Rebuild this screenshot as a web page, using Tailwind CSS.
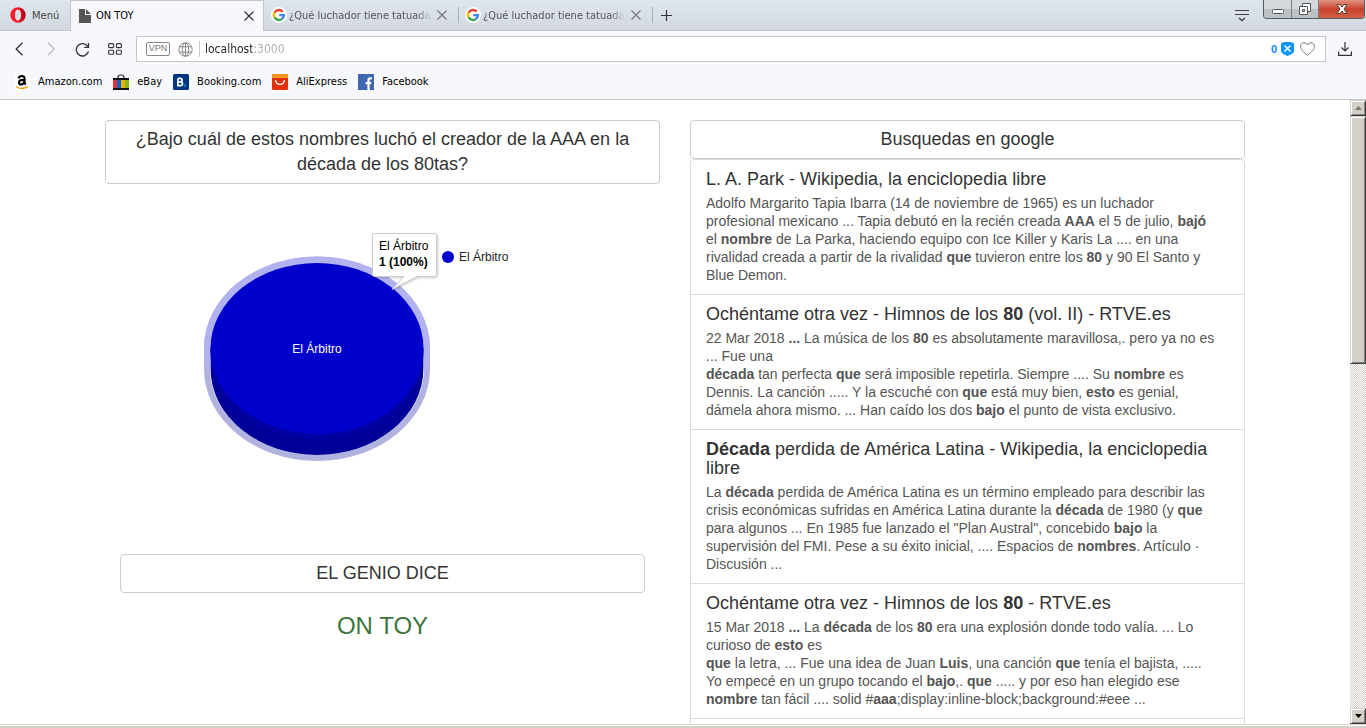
<!DOCTYPE html>
<html lang="es">
<head>
<meta charset="utf-8">
<meta name="viewport" content="width=device-width, initial-scale=1">
<title>ON TOY</title>
<script src="https://cdn.jsdelivr.net/npm/@tailwindcss/browser@4"></script>
</head>
<body class="flex h-screen flex-col overflow-hidden bg-white font-['Liberation_Sans',Arial,sans-serif] text-[#333]">

<svg class="hidden" aria-hidden="true">
  <symbol id="google" viewBox="0 0 16 16">
    <circle cx="8" cy="8" r="8" fill="#fff"/>
    <g fill="none" stroke-width="2.4">
      <path d="M11.7 4.600A5 5 0 0 0 3.600 5.600" stroke="#ea4335"/>
      <path d="M3.700 5.400a5 5 0 0 0 0 5.200" stroke="#fbbc05"/>
      <path d="M3.600 10.400a5 5 0 0 0 7.600 1.400" stroke="#34a853"/>
      <path d="M8.200 8.100h4.700a5 5 0 0 1-1.800 3.800" stroke="#4285f4"/>
    </g>
  </symbol>
  <symbol id="close" viewBox="0 0 10 10"><path d="M.5.5l9 9M9.500.5l-9 9" fill="none" stroke="currentColor" stroke-width="1.200"/></symbol>
</svg>

<header class="shrink-0 font-['DejaVu_Sans_Condensed','DejaVu_Sans',sans-serif] text-[11px]">
  <div class="flex h-[31px] border-b border-[#c3c6ca] bg-linear-to-b from-[#dfe6ee] to-[#d3d8e0]">
    <button class="flex w-[70px] shrink-0 items-center gap-[6px] pl-[10px] text-[#444]">
      <svg class="size-4" viewBox="0 0 16 16"><defs><linearGradient id="op" x1="0" x2="1"><stop offset="0.4" stop-color="#ff1b2d"/><stop offset="1" stop-color="#a70014"/></linearGradient></defs><path fill="url(#op)" fill-rule="evenodd" d="M8 .3a7.700 7.700 0 1 0 0 15.400A7.700 7.700 0 0 0 8 .3zm0 2.100c1.900 0 3.100 2.400 3.100 5.600s-1.200 5.600-3.100 5.600S4.900 11.200 4.900 8 6.100 2.400 8 2.400z"/></svg>
      <span class="pt-[2px]">Menú</span>
    </button>
    <div class="-mb-px flex w-[194px] shrink-0 items-center border border-b-0 border-[#c3c6ca] bg-[#f7f8fb] pr-[9px] pl-2 text-black">
      <svg class="mr-[5px] h-[14px] w-3" viewBox="0 0 12 14" fill="#555"><path d="M0 0h6v6h6v8H0zM7 0l5 5H7z"/></svg>
      <span class="grow">ON TOY</span>
      <button aria-label="Cerrar" class="text-[#333]"><svg class="size-[10px]"><use href="#close"/></svg></button>
    </div>
    <div class="flex w-[194px] shrink-0 items-center pr-[11px] pl-[7px] text-[#555]">
      <svg class="mr-[2px] size-4 shrink-0"><use href="#google"/></svg>
      <span class="min-w-0 grow overflow-hidden pt-[2px] whitespace-nowrap mask-r-from-90% mask-r-to-100%">¿Qué luchador tiene tatuadas</span>
      <button aria-label="Cerrar" class="ml-[6px] text-[#777]"><svg class="size-[10px]"><use href="#close"/></svg></button>
    </div>
    <div class="my-[7px] w-px shrink-0 bg-[#aaaeb3]"></div>
    <div class="flex w-[193px] shrink-0 items-center pr-[11px] pl-[6px] text-[#555]">
      <svg class="mr-[2px] size-4 shrink-0"><use href="#google"/></svg>
      <span class="min-w-0 grow overflow-hidden pt-[2px] whitespace-nowrap mask-r-from-90% mask-r-to-100%">¿Qué luchador tiene tatuadas</span>
      <button aria-label="Cerrar" class="ml-[6px] text-[#777]"><svg class="size-[10px]"><use href="#close"/></svg></button>
    </div>
    <div class="my-[7px] w-px shrink-0 bg-[#aaaeb3]"></div>
    <button aria-label="Nueva pestaña" class="ml-2"><svg class="size-[11px]" viewBox="0 0 11 11"><path d="M5.500 0v11M0 5.500h11" stroke="#333" stroke-width="1.200"/></svg></button>
    <div class="grow"></div>
    <button aria-label="Menú de pestañas" class="mr-[14px]"><svg class="h-[13px] w-[14px]" viewBox="0 0 14 13" fill="none" stroke="#444"><path d="M0 1.500h14M0 5.500h14"/><path d="M4 9l3 2.500L10 9" stroke-width="1.500"/></svg></button>
    <div class="mr-px flex h-[19px] shrink-0 overflow-hidden rounded-b border border-t-0 border-[#555b62]">
      <button aria-label="Minimizar" class="flex w-7 items-center justify-center border-r border-[#777d84] bg-linear-to-b from-[#d3d8dc] from-50% to-[#bcc1c6] to-50%"><svg class="mt-[5px] h-[5px] w-3" viewBox="0 0 12 5"><rect x=".5" y=".5" width="11" height="4" rx="1" fill="#fff" stroke="#555"/></svg></button>
      <button aria-label="Restaurar" class="flex w-[27px] items-center justify-center border-r border-[#777d84] bg-linear-to-b from-[#d3d8dc] from-50% to-[#bcc1c6] to-50%"><svg class="size-3" viewBox="0 0 12 12" stroke="#555"><path d="M3.500.5h8v8h-8z" fill="#fff"/><path d="M.5 3.500h8v8h-8z" fill="#fff"/><path d="M3.500 6.500h2v2h-2z" fill="#bcc1c6"/></svg></button>
      <button aria-label="Cerrar ventana" class="flex w-[45px] items-center justify-center bg-linear-to-b from-[#e09385] via-[#c8412c] via-50% to-[#d4604a]"><svg class="h-[10px] w-3" viewBox="0 0 12 10"><path d="M1 .5h3l2 2.500 2-2.500h3L8 5l3 4.500H8L6 7 4 9.500H1L4 5z" fill="#fff" stroke="#543"/></svg></button>
    </div>
  </div>

  <div class="flex h-9 items-center bg-[#f7f8fb] pr-[14px] pl-[15px] text-[#333]">
    <button aria-label="Atrás" class="mr-[22px]"><svg class="h-[14px] w-[9px]" viewBox="0 0 9 14" fill="none" stroke="#333" stroke-width="1.300"><path d="M7.500.8L1.200 7l6.300 6.200"/></svg></button>
    <button aria-label="Adelante" class="mr-[20px]"><svg class="h-[14px] w-[9px]" viewBox="0 0 9 14" fill="none" stroke="#bbb" stroke-width="1.300"><path d="M2 .8L8.200 7 2 13.200"/></svg></button>
    <button aria-label="Recargar" class="mr-[18px]"><svg class="size-[15px]" viewBox="0 0 15 15" fill="none" stroke="#333" stroke-width="1.300"><path d="M13.500 9.500A6.200 6.200 0 1 1 12.800 4.500M13.500 1v4.300H9.200"/></svg></button>
    <button aria-label="Acceso rápido" class="mr-[14px]"><svg class="h-3 w-[14px]" viewBox="0 0 14 12" fill="none" stroke="#333" stroke-width="1.100"><rect x=".6" y=".6" width="5" height="4" rx="1"/><rect x="8.400" y=".6" width="5" height="4" rx="1"/><rect x=".6" y="7.200" width="5" height="4" rx="1"/><rect x="8.400" y="7.200" width="5" height="4" rx="1"/></svg></button>
    <div class="flex h-[26px] grow items-center border border-[#c3c6ca] bg-white pr-[10px] pl-[9px]">
      <button class="mr-2 flex h-[14px] w-6 shrink-0 items-center justify-center rounded-[2px] border border-[#888] font-['Liberation_Sans',sans-serif] text-[9px] text-[#777]">VPN</button>
      <svg class="mr-[6px] size-[15px] shrink-0" viewBox="0 0 15 15" fill="none" stroke="#888"><circle cx="7.500" cy="7.500" r="6.700"/><ellipse cx="7.500" cy="7.500" rx="3.200" ry="6.700"/><path d="M7.500.8v13.400M1.500 4.800h12M1.500 10.200h12"/></svg>
      <div class="h-4 w-px bg-[#ccc]"></div>
      <input aria-label="Dirección" value="localhost:3000" class="ml-[5px] min-w-0 grow bg-linear-to-r from-[#222] from-[47px] to-[#aaa] to-[47px] bg-clip-text text-[12px] text-transparent outline-none">
      <span class="mr-1 font-['Liberation_Sans',sans-serif] font-bold text-[#0a8cff]">0</span>
      <button aria-label="Bloqueador" class="mr-[6px]"><svg class="h-[14px] w-[13px]" viewBox="0 0 13 14"><path d="M1.500.5Q6.500-.7 11.500.5q1.500.5 1.500 2v6.500q0 2.500-6.500 5Q0 11.500 0 9V2.500q0-1.500 1.500-2z" fill="#0a96ff"/><path d="M3.500 3.500l6 6M9.500 3.500l-6 6" stroke="#fff" stroke-width="1.500"/></svg></button>
      <button aria-label="Favorito"><svg class="h-[14px] w-[15px]" viewBox="0 0 15 14" fill="none" stroke="#777"><path d="M7.500 13.300C3 9.800.6 7.300.6 4.300.6 2.200 2.200.7 4 .7c1.600 0 2.800.9 3.500 2.300C8.200 1.600 9.400.7 11 .7c1.800 0 3.400 1.500 3.400 3.600 0 3-2.400 5.500-6.900 9z"/></svg></button>
    </div>
    <button aria-label="Descargas" class="ml-3"><svg class="size-[14px]" viewBox="0 0 14 14" fill="none" stroke="#333" stroke-width="1.200"><path d="M7 0v9M3.500 5.500L7 9l3.500-3.500M.6 9.500v3.800h12.800V9.500"/></svg></button>
  </div>

  <nav class="flex h-[33px] items-center gap-[11px] border-b border-[#c3c6ca] bg-[#f7f8fb] pb-[3px] pl-[14px] text-black">
    <a href="#" class="flex items-center gap-2"><svg class="size-4" viewBox="0 0 16 16"><rect width="16" height="16" rx="1" fill="#fff"/><path d="M4.500 4.400C5 2.700 6.200 2 7.700 2c2 0 2.900.9 2.900 2.600v4.500l1.100 1.500M10 5.700c-3 0-5 .6-5 2.700 0 1.300.8 2.100 2 2.100 1.600 0 3-1.300 3-3.200" fill="none" stroke="#000" stroke-width="2.100"/><path d="M2 12.500c3.500 2.400 8 2.400 11.500.2" fill="none" stroke="#f90" stroke-width="1.400"/></svg><span class="pt-[2px]">Amazon.com</span></a>
    <a href="#" class="flex items-center gap-2"><svg class="size-4" viewBox="0 0 16 16"><path d="M5 5V3q0-2 3-2t3 2v2" fill="none" stroke="#222" stroke-width="1.200"/><path d="M0 4h16v12H0z" fill="#111"/><path d="M0 6h4v8H0z" fill="#e5322d"/><path d="M4 6h4v8H4z" fill="#0064d2"/><path d="M8 6h4v8H8z" fill="#f5af02"/><path d="M12 6h4v8h-4z" fill="#86b817"/></svg><span class="pt-[2px]">eBay</span></a>
    <a href="#" class="flex items-center gap-2"><svg class="size-4" viewBox="0 0 16 16"><rect width="16" height="16" rx="1.500" fill="#003580"/><path d="M4.900 4.400v7.200h2.600q2 0 2-1.900 0-1.800-2-1.800H5m0-3.500h2.200q1.900 0 1.900 1.700 0 1.800-1.900 1.800" fill="none" stroke="#fff" stroke-width="1.700"/><circle cx="12" cy="11.500" r="1.100" fill="#0af"/></svg><span class="pt-[2px]">Booking.com</span></a>
    <a href="#" class="flex items-center gap-2"><svg class="size-4" viewBox="0 0 16 16"><rect width="16" height="16" rx="1.500" fill="#e62e04"/><path d="M0 4V1.500Q0 0 1.500 0h13Q16 0 16 1.500V4z" fill="#f7971d"/><path d="M3.500 6c.5 5.800 8.500 5.800 9 0" fill="none" stroke="#fff" stroke-width="1.400"/></svg><span class="pt-[2px]">AliExpress</span></a>
    <a href="#" class="flex items-center gap-2"><svg class="size-4" viewBox="0 0 16 16"><path d="M0 0h16v16H0z" fill="#4267b2"/><path d="M13.800 4.300h-1.600q-1.700 0-1.700 1.800V16M7.600 9.200h5.600" fill="none" stroke="#fff" stroke-width="2.200"/></svg><span class="pt-[2px]">Facebook</span></a>
  </nav>
</header>

<div class="flex min-h-0 grow">
  <main class="min-w-0 grow overflow-hidden">
    <div class="mx-auto grid max-w-[1170px] grid-cols-2 gap-[30px] px-[15px] pt-5">
      <section>
        <h1 class="rounded border border-[#ccc] px-3 py-[6px] text-center text-[18px] leading-[25px]">¿Bajo cuál de estos nombres luchó el creador de la AAA en la década de los 80tas?</h1>
        <svg class="block h-[370px] w-[525px] font-['Liberation_Sans',Arial,sans-serif] text-[12px]" viewBox="105 184 525 370" role="img" aria-label="El Árbitro 1 (100%)">
          <path d="M204 348a113 91.500 0 0 1 226 0v21a113 92 0 0 1-226 0z" fill="#b2b2e0"/>
          <ellipse cx="317" cy="348" rx="113" ry="91.500" fill="#b2b2f0"/>
          <path d="M210 348v21a107 86 0 0 0 214 0v-21z" fill="#fff"/>
          <path d="M210.600 348v21a106.400 86 0 0 0 212.800 0v-21z" fill="#009"/>
          <path d="M210.600 348v6a106.400 85.500 0 0 0 212.800 0v-6z" fill="#0000a3"/>
          <ellipse cx="317" cy="348.500" rx="106.500" ry="85.500" fill="#00c"/>
          <text x="317" y="353" text-anchor="middle" fill="#fff">El Árbitro</text>
          <circle cx="448" cy="257" r="6" fill="#00c"/>
          <text x="459" y="261" fill="#222">El Árbitro</text>
          <path d="M374.500 233.500h60q2 0 2 2v39q0 2-2 2H417l-25 13 12-13h-29.500q-2 0-2-2v-39q0-2 2-2z" fill="#fff" stroke="#ccc" style="filter:drop-shadow(1px 1px 1px rgb(0 0 0 / .2))"/>
          <text x="379" y="250" fill="#000">El Árbitro</text>
          <text x="379" y="266" fill="#000" font-weight="bold">1 (100%)</text>
        </svg>
        <div class="px-[15px] text-center">
          <h2 class="rounded border border-[#ccc] px-3 py-[6px] text-[18px] leading-[25px]">EL GENIO DICE</h2>
          <p class="mt-5 text-[24px] leading-[26px] text-[#3c763d]">ON TOY</p>
        </div>
      </section>

      <section>
        <h2 class="rounded border border-[#ccc] px-3 py-[6px] text-center text-[18px] leading-[25px]">Busquedas en google</h2>
        <ul class="rounded border-x border-[#ddd] text-[14px] leading-[18px] text-[#555]">
          <li class="rounded-t border-t border-[#ddd] px-[15px] py-[10px]">
            <h3 class="mb-[5px] text-[18px] leading-[19px] text-[#333]">L. A. Park - Wikipedia, la enciclopedia libre</h3>
            <p class="pr-[11px]">Adolfo Margarito Tapia Ibarra (14 de noviembre de 1965) es un luchador profesional mexicano ... Tapia debutó en la recién creada <b>AAA</b> el 5 de julio, <b>bajó</b> el <b>nombre</b> de La Parka, haciendo equipo con Ice Killer y Karis La .... en una rivalidad creada a partir de la rivalidad <b>que</b> tuvieron entre los <b>80</b> y 90 El Santo y Blue Demon.</p>
          </li>
          <li class="border-t border-[#ddd] px-[15px] py-[10px]">
            <h3 class="mb-[5px] text-[18px] leading-[19px] text-[#333]">Ochéntame otra vez - Himnos de los <b>80</b> (vol. II) - RTVE.es</h3>
            <p class="pr-[11px]">22 Mar 2018 <b>...</b> La música de los <b>80</b> es absolutamente maravillosa,. pero ya no es ... Fue una<br><b>década</b> tan perfecta <b>que</b> será imposible repetirla. Siempre .... Su <b>nombre</b> es Dennis. La canción ..... Y la escuché con <b>que</b> está muy bien, <b>esto</b> es genial, dámela ahora mismo. ... Han caído los dos <b>bajo</b> el punto de vista exclusivo.</p>
          </li>
          <li class="border-t border-[#ddd] px-[15px] py-[10px]">
            <h3 class="mb-[5px] text-[18px] leading-[19px] text-[#333]"><b>Década</b> perdida de América Latina - Wikipedia, la enciclopedia libre</h3>
            <p class="pr-[11px]">La <b>década</b> perdida de América Latina es un término empleado para describir las crisis económicas sufridas en América Latina durante la <b>década</b> de 1980 (y <b>que</b> para algunos ... En 1985 fue lanzado el "Plan Austral", concebido <b>bajo</b> la supervisión del FMI. Pese a su éxito inicial, .... Espacios de <b>nombres</b>. Artículo · Discusión ...</p>
          </li>
          <li class="border-t border-[#ddd] px-[15px] py-[10px]">
            <h3 class="mb-[5px] text-[18px] leading-[19px] text-[#333]">Ochéntame otra vez - Himnos de los <b>80</b> - RTVE.es</h3>
            <p class="pr-[11px]">15 Mar 2018 <b>...</b> La <b>década</b> de los <b>80</b> era una explosión donde todo valía. ... Lo curioso de <b>esto</b> es<br><b>que</b> la letra, ... Fue una idea de Juan <b>Luis</b>, una canción <b>que</b> tenía el bajista, ..... Yo empecé en un grupo tocando el <b>bajo</b>,. <b>que</b> ..... y por eso han elegido ese <b>nombre</b> tan fácil .... solid #<b>aaa</b>;display:inline-block;background:#eee ...</p>
          </li>
          <li class="border-t border-[#ddd] px-[15px] py-[10px]"></li>
        </ul>
      </section>
    </div>
  </main>

  <div class="flex w-4 shrink-0 flex-col bg-[repeating-conic-gradient(#d4d0c8_0_25%,#fff_0_50%)] bg-size-[2px_2px]">
    <button aria-label="Subir" class="flex h-4 shrink-0 items-center justify-center border border-t-[#d4d0c8] border-r-[#404040] border-b-[#404040] border-l-[#d4d0c8] bg-[#d4d0c8] shadow-[inset_1px_1px_#fff,inset_-1px_-1px_#808080]"><svg class="h-1 w-[7px]" viewBox="0 0 7 4"><path d="M0 4l3.500-4L7 4z" fill="#777"/></svg></button>
    <div class="h-[248px] shrink-0 border border-t-[#d4d0c8] border-r-[#404040] border-b-[#404040] border-l-[#d4d0c8] bg-[#d4d0c8] shadow-[inset_1px_1px_#fff,inset_-1px_-1px_#808080]"></div>
    <div class="grow"></div>
    <button aria-label="Bajar" class="flex h-4 shrink-0 items-center justify-center border border-t-[#d4d0c8] border-r-[#404040] border-b-[#404040] border-l-[#d4d0c8] bg-[#d4d0c8] shadow-[inset_1px_1px_#fff,inset_-1px_-1px_#808080]"><svg class="h-1 w-[7px]" viewBox="0 0 7 4"><path d="M0 0h7L3.500 4z" fill="#000"/></svg></button>
  </div>
</div>
<footer class="h-1 shrink-0 border-t border-b-2 border-[#d4d0c8] bg-white"></footer>
</body>
</html>
